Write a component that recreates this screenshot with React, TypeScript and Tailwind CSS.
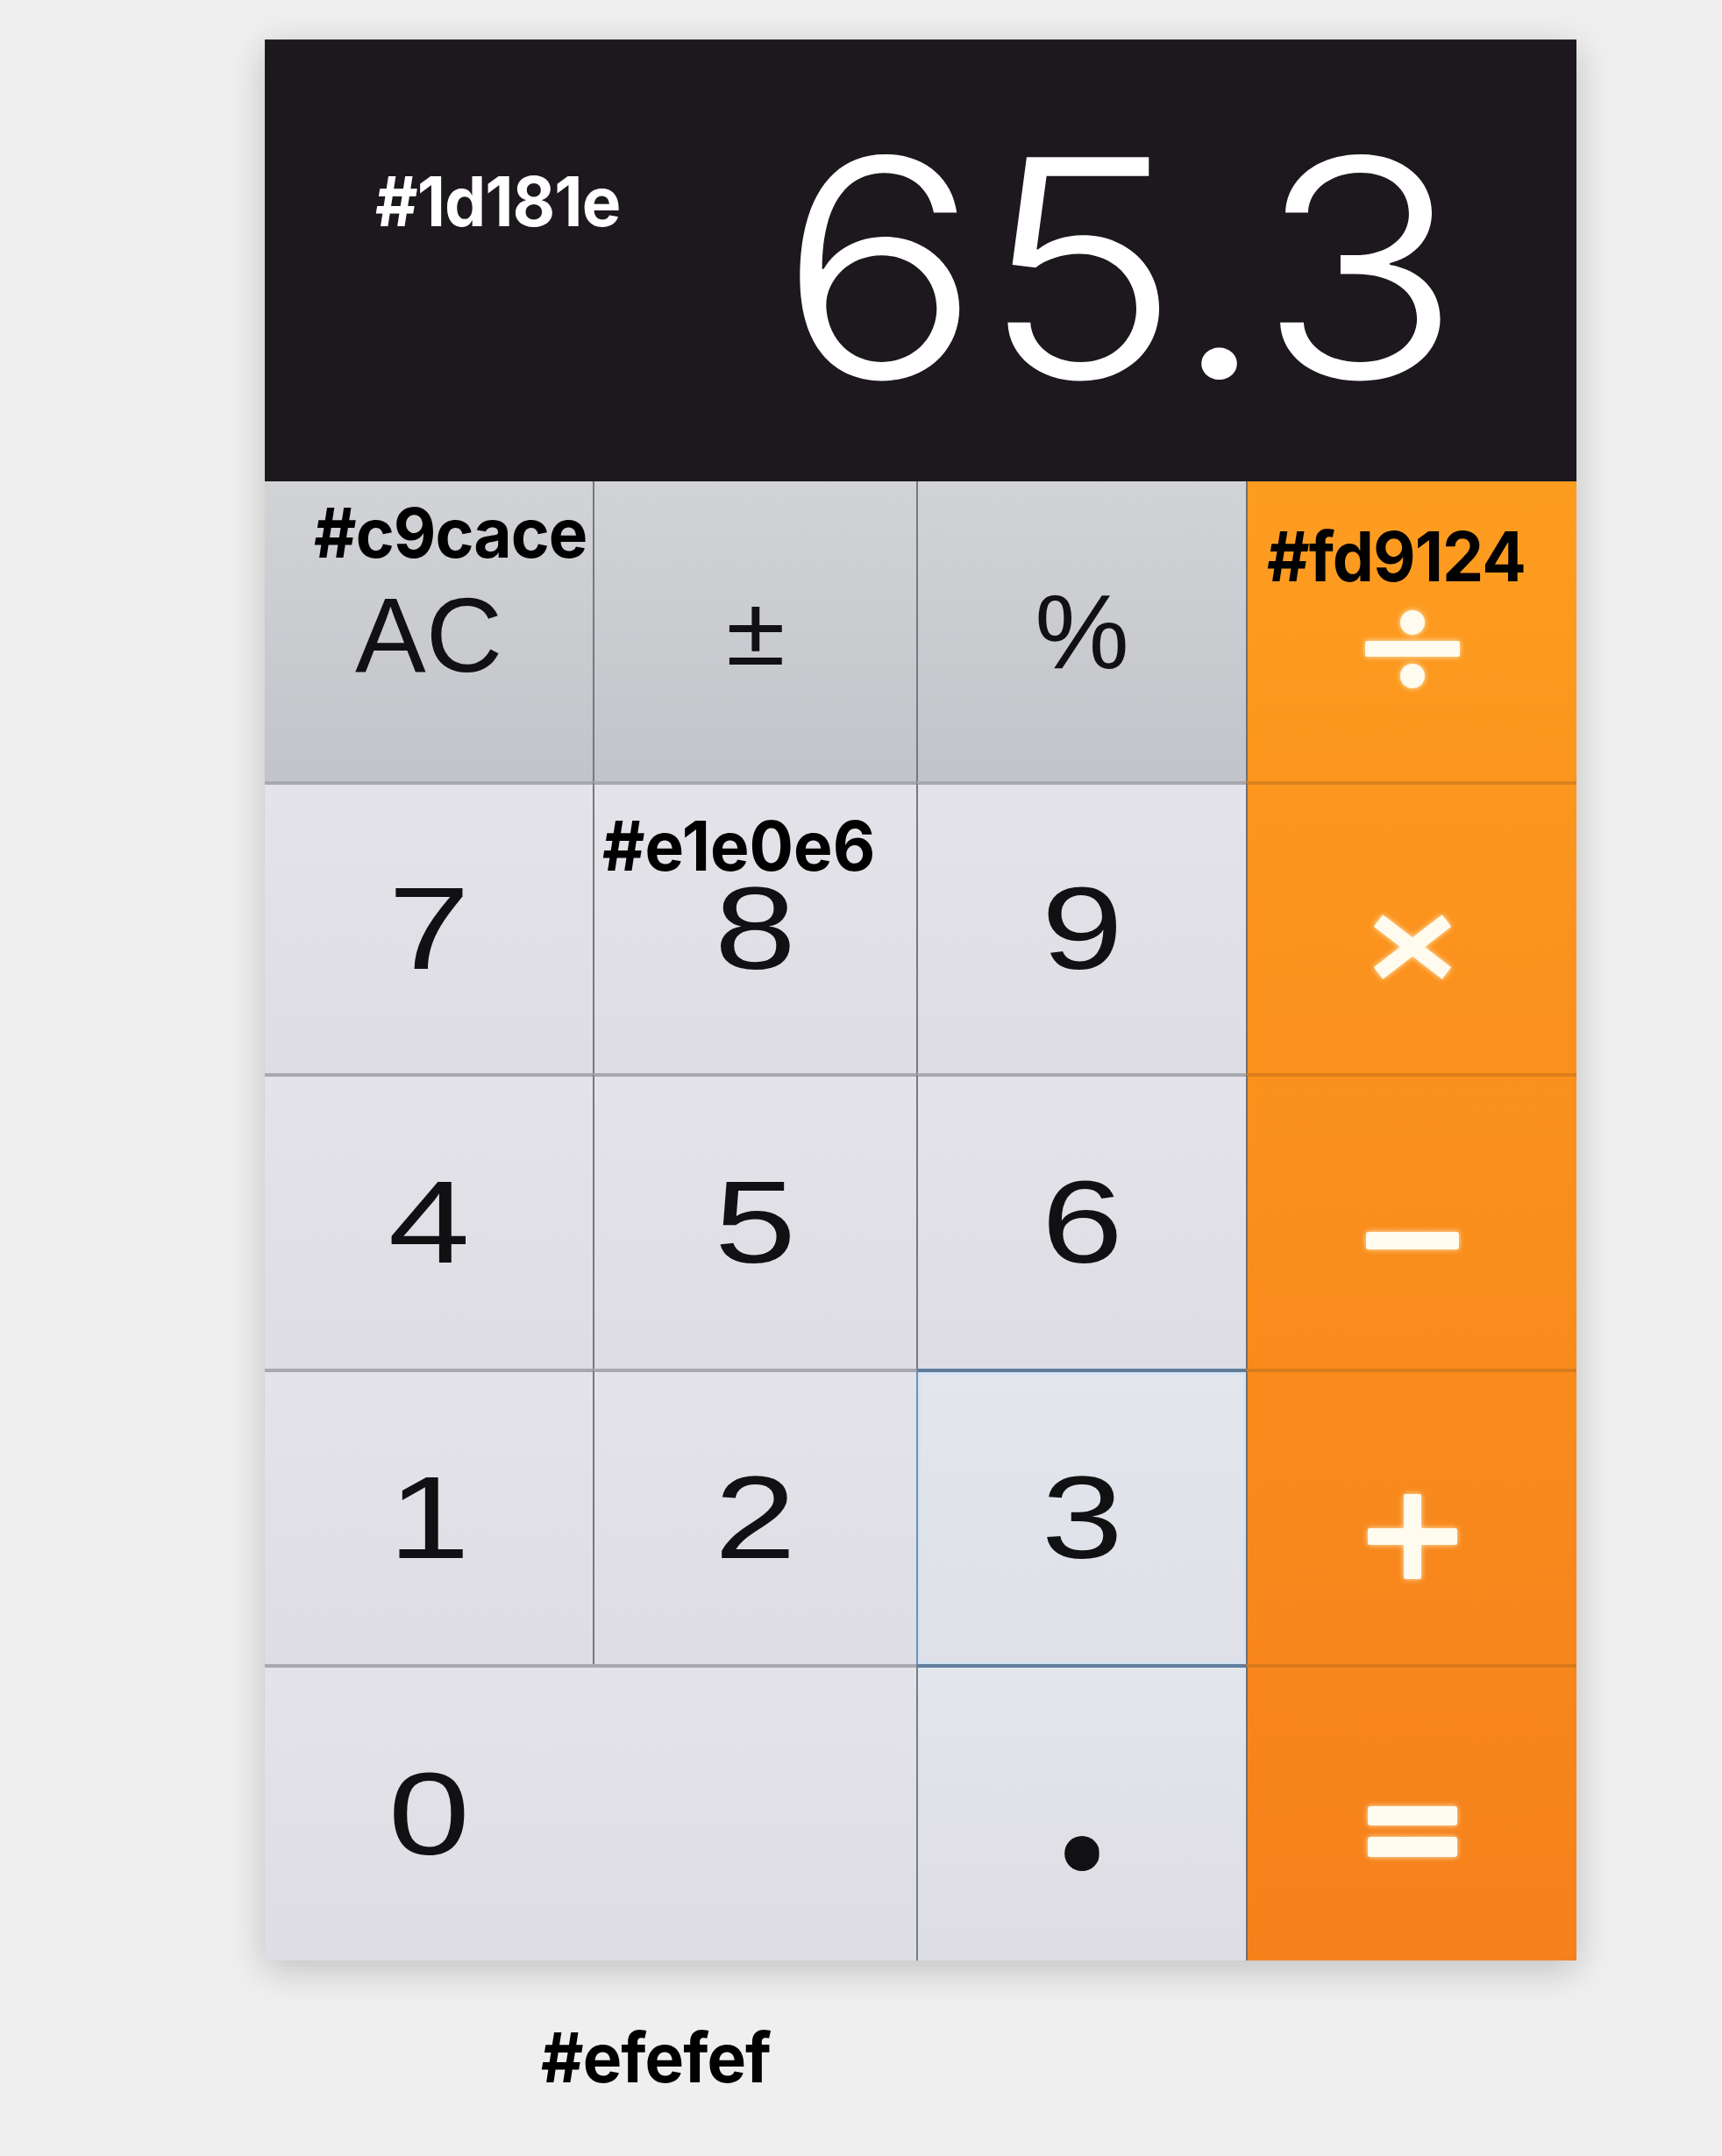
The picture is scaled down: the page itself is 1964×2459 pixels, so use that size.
import React from "react";

function Divide() {
  return (
    <svg width="110" height="100" viewBox="0 0 110 100" className="drop-shadow-[0_0_3px_rgba(255,245,210,0.9)]">
      <rect x="1" y="41" width="108" height="18" rx="2" fill="#fffbee" />
      <circle cx="55" cy="20" r="14" fill="#fffbee" />
      <circle cx="55" cy="81" r="14" fill="#fffbee" />
    </svg>
  );
}

function Times() {
  return (
    <svg width="110" height="100" viewBox="0 0 110 100" className="drop-shadow-[0_0_3px_rgba(255,245,210,0.9)]">
      <path d="M16 20 L94 80 M94 20 L16 80" stroke="#fffbee" strokeWidth="17" strokeLinecap="butt" />
    </svg>
  );
}

function Minus() {
  return (
    <svg width="110" height="100" viewBox="0 0 110 100" className="drop-shadow-[0_0_3px_rgba(255,245,210,0.9)]">
      <rect x="2" y="40" width="106" height="20" rx="3" fill="#fffbee" />
    </svg>
  );
}

function Plus() {
  return (
    <svg width="110" height="100" viewBox="0 0 110 100" className="drop-shadow-[0_0_3px_rgba(255,245,210,0.9)]">
      <rect x="4" y="41" width="102" height="19" rx="2" fill="#fffbee" />
      <rect x="45" y="2" width="20" height="97" rx="2" fill="#fffbee" />
    </svg>
  );
}

function Equals() {
  return (
    <svg width="110" height="100" viewBox="0 0 110 100" className="drop-shadow-[0_0_3px_rgba(255,245,210,0.9)]">
      <rect x="4" y="21" width="102" height="22" rx="3" fill="#fffbee" />
      <rect x="4" y="56" width="102" height="23" rx="3" fill="#fffbee" />
    </svg>
  );
}

const labelCls =
  "absolute font-['Inter',sans-serif] font-bold text-[78px] leading-[0.75] tracking-[-1px] scale-x-[0.96] origin-left whitespace-nowrap";

function Digit({ children }: { children: React.ReactNode }) {
  return (
    <span className="font-['Liberation_Sans',Arial,sans-serif] text-[134px] leading-[0.75] text-[#111113] scale-x-125 inline-block">
      {children}
    </span>
  );
}

export default function App() {
  const gray =
    "relative flex items-center justify-center bg-linear-to-b from-[#d2d3d7] to-[#c3c4c9]";
  const light =
    "relative flex items-center justify-center bg-linear-to-b from-[#e4e3e9] to-[#dedde3] border-t-4 border-t-[#a8a9ae]";
  const orange =
    "relative flex items-center justify-center pt-[40px] border-l-2 border-l-[#6f6f72]";
  const vline = "border-l-2 border-l-[#77787d]";

  return (
    <div className="min-h-[2459px] w-full bg-[#efefef]">
      <div className="pl-[302px] pt-[45px]">
        <div className="w-[1496px] shadow-[0_10px_40px_rgba(0,0,0,0.2)]">
          {/* Display */}
          <div className="relative h-[504px] bg-[#1d181e] flex justify-end items-start pt-[86px] pr-[131px] border-t border-t-[#2a2a2c]">
            <span className={labelCls + " text-white left-[126px] top-[155px]"}>#1d181e</span>
            <span className="font-['Inter',sans-serif] font-light text-[346px] leading-none text-white scale-x-[1.11] origin-right inline-block">
              65.3
            </span>
          </div>

          {/* Keypad */}
          <div className="grid grid-cols-[374px_369px_376px_377px] grid-rows-[342px_333px_337px_337px_338px]">
            {/* Row 1 */}
            <div className={gray}>
              <span className={labelCls + " text-black left-[56px] top-[30px]"}>#c9cace</span>
              <span className="font-['Liberation_Sans',Arial,sans-serif] text-[121px] leading-[0.75] text-[#111113] mt-[8px]">AC</span>
            </div>
            <div className={gray + " " + vline}>
              <span className="font-['Liberation_Sans',Arial,sans-serif] text-[112px] leading-none text-[#111113] scale-x-110 inline-block">±</span>
            </div>
            <div className={gray + " " + vline}>
              <span className="font-['Liberation_Sans',Arial,sans-serif] text-[121px] leading-[0.75] text-[#111113]">%</span>
            </div>
            <div className={orange + " bg-linear-to-b from-[#fd9d20] to-[#fc961e]"}>
              <span className={labelCls + " text-black left-[22px] top-[57px]"}>#fd9124</span>
              <Divide />
            </div>

            {/* Row 2 */}
            <div className={light}>
              <Digit>7</Digit>
            </div>
            <div className={light + " " + vline}>
              <span className={labelCls + " text-black left-[9px] top-[41px] tracking-[0px]"}>#e1e0e6</span>
              <Digit>8</Digit>
            </div>
            <div className={light + " " + vline}>
              <Digit>9</Digit>
            </div>
            <div className={orange + " border-t-4 border-t-[#dc821e] bg-linear-to-b from-[#fc961e] to-[#fb901d]"}>
              <Times />
            </div>

            {/* Row 3 */}
            <div className={light}>
              <Digit>4</Digit>
            </div>
            <div className={light + " " + vline}>
              <Digit>5</Digit>
            </div>
            <div className={light + " " + vline}>
              <Digit>6</Digit>
            </div>
            <div className={orange + " border-t-4 border-t-[#db7f1c] bg-linear-to-b from-[#fa911d] to-[#f98b1c]"}>
              <Minus />
            </div>

            {/* Row 4 */}
            <div className={light}>
              <Digit>1</Digit>
            </div>
            <div className={light + " " + vline}>
              <Digit>2</Digit>
            </div>
            <div className="relative flex items-center justify-center bg-linear-to-b from-[#e3e6ed] to-[#dfe0e8] border-t-4 border-t-[#607d9b] border-l-2 border-l-[#6d90b6] shadow-[inset_0_0_0_3px_rgba(205,225,245,0.7)]">
              <Digit>3</Digit>
            </div>
            <div className={orange + " border-t-4 border-t-[#d97c1b] bg-linear-to-b from-[#f98b1c] to-[#f7861c]"}>
              <Plus />
            </div>

            {/* Row 5 */}
            <div className="col-span-2 flex items-center bg-linear-to-b from-[#e4e3e9] to-[#dedde3] border-t-4 border-t-[#a8a9ae]">
              <div className="w-[374px] flex justify-center">
                <Digit>0</Digit>
              </div>
            </div>
            <div className="relative flex items-center justify-center bg-linear-to-b from-[#e3e6ec] to-[#dedde3] border-t-4 border-t-[#607d9b] border-l-2 border-l-[#6f7f90]">
              <span className="font-['Liberation_Sans',Arial,sans-serif] font-bold text-[280px] leading-none text-[#111113] -translate-y-[32px] inline-block [clip-path:circle(20px_at_39px_217px)]">.</span>
            </div>
            <div className={orange + " border-t-4 border-t-[#d97a1b] bg-linear-to-b from-[#f7861c] to-[#f5811c]"}>
              <Equals />
            </div>
          </div>
        </div>

        <div className="mt-[82px] pl-[315px]">
          <span className="inline-block font-['Inter',sans-serif] font-bold text-[78px] leading-[0.75] tracking-[-1px] scale-x-[0.96] origin-left text-black whitespace-nowrap">
            #efefef
          </span>
        </div>
      </div>
    </div>
  );
}
